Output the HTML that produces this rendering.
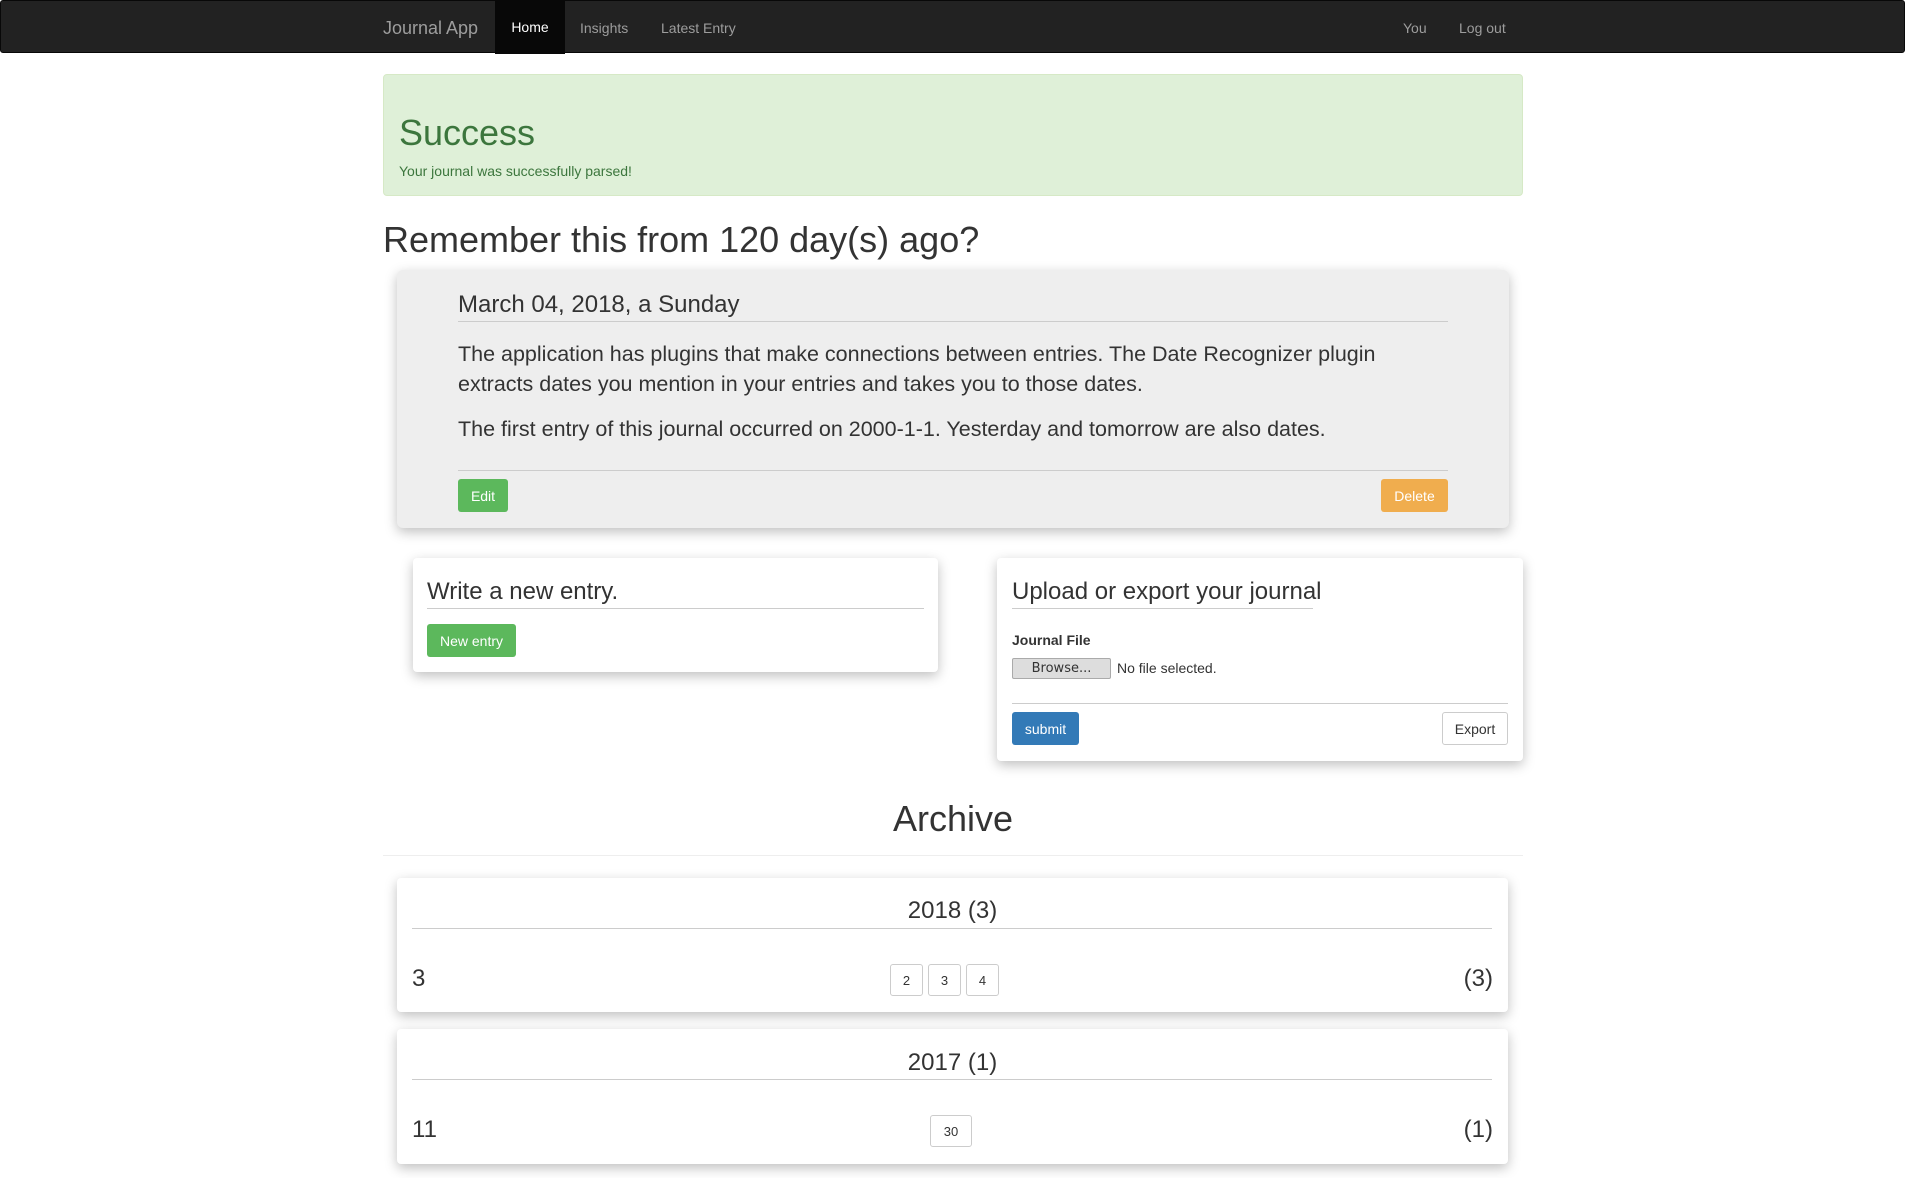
<!DOCTYPE html>
<html><head><meta charset="utf-8"><style>
*{box-sizing:border-box}
body{margin:0;width:1905px;height:1178px;overflow:hidden;background:#fff;font-family:"Liberation Sans",sans-serif;color:#333;position:relative}
.a{position:absolute}
.nav{left:0;top:0;width:1905px;height:53px;background:#222;border:1px solid #080808;border-radius:3px}
.nav span{position:absolute;top:1px;line-height:53px;font-size:14px;color:#9d9d9d}
.card{background:#fff;border-radius:4px;box-shadow:0 4px 12px rgba(0,0,0,.25)}
.hr{height:1px;background:#ccc}
.btn{display:flex;align-items:center;justify-content:center;font-size:14px;border-radius:3px;color:#fff}
.sm{background:#fff;border:1px solid #ccc;color:#333;font-size:13px}
</style></head><body>
<div class="a nav">
<span style="left:382px;font-size:18px">Journal App</span>
<span style="left:494px;width:70px;top:0;background:#080808;color:#fff;text-align:center">Home</span>
<span style="left:579px">Insights</span>
<span style="left:660px">Latest Entry</span>
<span style="left:1402px">You</span>
<span style="left:1458px">Log out</span>
</div>
<div class="a" style="left:383px;top:74px;width:1140px;height:122px;background:#dff0d8;border:1px solid #d6e9c6;border-radius:4px;color:#3c763d">
<div class="a" style="left:15px;top:37px;font-size:36px">Success</div>
<div class="a" style="left:15px;top:88px;font-size:14px">Your journal was successfully parsed!</div>
</div>
<div class="a" style="left:383px;top:219px;font-size:36px">Remember this from 120 day(s) ago?</div>
<div class="a card" style="left:397px;top:270px;width:1112px;height:258px;background:#eee;border-radius:6px">
<div class="a" style="left:61px;top:21px;font-size:24px">March 04, 2018, a Sunday</div>
<div class="a hr" style="left:61px;top:51px;width:990px"></div>
<div class="a" style="left:61px;top:69px;width:990px;font-size:21.5px;line-height:30px">The application has plugins that make connections between entries. The Date Recognizer plugin extracts dates you mention in your entries and takes you to those dates.</div>
<div class="a" style="left:61px;top:144px;font-size:21.5px;line-height:30px">The first entry of this journal occurred on 2000-1-1. Yesterday and tomorrow are also dates.</div>
<div class="a hr" style="left:61px;top:200px;width:990px"></div>
<div class="a btn" style="left:61px;top:209px;width:50px;height:33px;background:#5cb85c">Edit</div>
<div class="a btn" style="left:984px;top:209px;width:67px;height:33px;background:#f0ad4e">Delete</div>
</div>
<div class="a card" style="left:413px;top:558px;width:525px;height:114px">
<div class="a" style="left:14px;top:20px;font-size:24px">Write a new entry.</div>
<div class="a hr" style="left:14px;top:50px;width:497px"></div>
<div class="a btn" style="left:14px;top:66px;width:89px;height:33px;background:#5cb85c">New entry</div>
</div>
<div class="a card" style="left:997px;top:558px;width:526px;height:203px">
<div class="a" style="left:15px;top:20px;font-size:24px">Upload or export your journal</div>
<div class="a hr" style="left:15px;top:50px;width:301px"></div>
<div class="a" style="left:15px;top:74px;font-size:14px;font-weight:bold">Journal File</div>
<div class="a" style="left:15px;top:100px;width:99px;height:21px;background:#ddd;border:1px solid #aaa;border-radius:2px;font-size:13px;text-align:center;line-height:19px;font-family:'DejaVu Sans',sans-serif">Browse...</div>
<div class="a" style="left:120px;top:102px;font-size:14px">No file selected.</div>
<div class="a hr" style="left:15px;top:145px;width:496px"></div>
<div class="a btn" style="left:15px;top:154px;width:67px;height:33px;background:#337ab7">submit</div>
<div class="a btn sm" style="left:445px;top:154px;width:66px;height:33px;font-size:14px">Export</div>
</div>
<div class="a" style="left:383px;top:798px;width:1140px;text-align:center;font-size:36px">Archive</div>
<div class="a hr" style="left:383px;top:855px;width:1140px;background:#eee"></div>
<div class="a card" style="left:397px;top:878px;width:1111px;height:134px">
<div class="a" style="left:0;top:19px;width:1111px;text-align:center;font-size:24px">2018 (3)</div>
<div class="a hr" style="left:15px;top:50px;width:1080px"></div>
<div class="a" style="left:15px;top:87px;font-size:24px">3</div>
<div class="a btn sm" style="left:493px;top:86px;width:33px;height:32px">2</div>
<div class="a btn sm" style="left:531px;top:86px;width:33px;height:32px">3</div>
<div class="a btn sm" style="left:569px;top:86px;width:33px;height:32px">4</div>
<div class="a" style="right:15px;top:87px;font-size:24px">(3)</div>
</div>
<div class="a card" style="left:397px;top:1029px;width:1111px;height:135px">
<div class="a" style="left:0;top:20px;width:1111px;text-align:center;font-size:24px">2017 (1)</div>
<div class="a hr" style="left:15px;top:50px;width:1080px"></div>
<div class="a" style="left:15px;top:87px;font-size:24px">11</div>
<div class="a btn sm" style="left:533px;top:86px;width:42px;height:32px">30</div>
<div class="a" style="right:15px;top:87px;font-size:24px">(1)</div>
</div>
</body></html>
